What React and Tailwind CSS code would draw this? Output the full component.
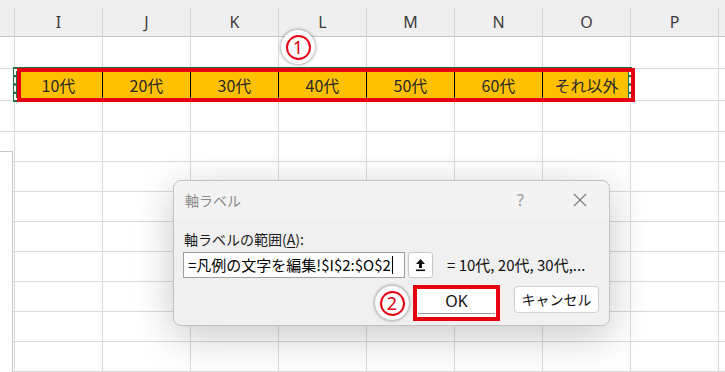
import React from "react";

const FONT = { fontFamily: "'Noto Sans', 'Noto Sans CJK JP', sans-serif" };
const JP = { fontFamily: "'Noto Sans CJK JP', 'Noto Sans', sans-serif" };

const cols = ["I", "J", "K", "L", "M", "N", "O", "P", ""];
const labels = ["10代", "20代", "30代", "40代", "50代", "60代", "それ以外"];

function Row({ h, children }) {
  return (
    <div className="flex border-b border-[#dadada]" style={{ height: h }}>
      {children}
    </div>
  );
}

function EmptyRow({ h }) {
  return (
    <Row h={h}>
      <div className="w-[14px] shrink-0" />
      {cols.map((c, i) => (
        <div key={i} className="w-[88px] shrink-0 border-l border-[#dadada]" />
      ))}
    </Row>
  );
}

function Marker({ n }) {
  return (
    <div className="w-[34px] h-[34px] rounded-full bg-white shadow-[0_0_3px_1px_rgba(0,0,0,0.3)] flex items-center justify-center">
      <div
        className="w-[25px] h-[25px] rounded-full border-2 border-[#e60012] flex items-center justify-center text-[#e60012] text-[18px] leading-none"
        style={FONT}
      >
        {n}
      </div>
    </div>
  );
}

export default function App() {
  return (
    <div className="relative w-[725px] h-[372px] overflow-hidden bg-white" style={FONT}>
      {/* header */}
      <div className="flex h-[37px] bg-[#efefef] border-b border-[#c4c4c4] pt-[8px]">
        <div className="w-[14px] shrink-0" />
        {cols.map((c, i) => (
          <div
            key={i}
            className="w-[88px] shrink-0 border-l border-[#d2d2d2] flex items-center justify-center text-[16px] text-[#3c3c3c]"
          >
            {c}
          </div>
        ))}
      </div>

      <EmptyRow h={32} />

      {/* selected row */}
      <Row h={32}>
        <div className="w-[14px] shrink-0" />
        {cols.map((c, i) =>
          i < 7 ? (
            <div
              key={i}
              className={`w-[88px] shrink-0 bg-[#ffc000] flex items-center justify-center text-[16px] text-[#2a2a2a] ${i === 0 ? "border-l border-[#dadada]" : "border-l border-black"}`}
              style={JP}
            >
              {labels[i]}
            </div>
          ) : (
            <div key={i} className="w-[88px] shrink-0 border-l border-[#dadada]" />
          )
        )}
      </Row>

      <EmptyRow h={31} />
      {[0, 1, 2, 3, 4, 5, 6, 7].map((i) => (
        <EmptyRow key={i} h={30} />
      ))}

      {/* left object edge */}
      <div className="absolute left-0 top-[151px] w-[13px] h-[230px] bg-white border-t border-r border-[#c8c8c8]" />

      {/* copy marquee */}
      <div className="absolute left-[13px] top-[67px] w-[619px] h-[35px] border-[4px] border-[#217346]" />
      <div className="absolute left-[14px] top-[69px] w-[617px] h-[31px] border-[2px] border-dashed border-white" />

      {/* red highlight */}
      <div className="absolute left-[17px] top-[68px] w-[618px] h-[34px] border-[4px] border-[#e60012]" />

      {/* marker 1 */}
      <div className="absolute left-[281px] top-[30px]">
        <Marker n="1" />
      </div>

      {/* dialog */}
      <div className="absolute left-[173px] top-[180px] w-[437px] h-[146px] rounded-[8px] bg-[#f0f0f0] border border-[#c2c2c2] shadow-[0_10px_40px_rgba(0,0,0,0.22)] flex flex-col" style={JP}>
        <div className="h-[38px] flex items-center pl-[11px] rounded-t-[8px] bg-[#f3f3f3]">
          <span className="text-[14px] text-[#8a8a8a]">軸ラベル</span>
          <span className="ml-auto mr-[49px] text-[16px] text-[#9a9a9a]" style={FONT}>?</span>
          <svg width="14" height="14" viewBox="0 0 14 14" className="mr-[22px]">
            <path d="M1 1 L13 13 M13 1 L1 13" stroke="#7a7a7a" strokeWidth="1.1" />
          </svg>
        </div>
        <div className="pl-[9px] pr-[10px] flex flex-col">
          <div className="mt-[10px] h-[20px] text-[14px] text-[#1a1a1a] leading-[20px] pl-[1px]">
            軸ラベルの範囲(<span className="underline underline-offset-2">A</span>):
          </div>
          <div className="mt-[3px] flex items-center">
            <div className="w-[222px] h-[26px] bg-white border border-[#a0a0a0] flex items-center pl-[4px] text-[15px] text-black">
              <span>=凡例の文字を編集!$I$2:$O$2</span>
              <span className="ml-[1px] w-px h-[18px] bg-black" />
            </div>
            <div className="ml-[3px] w-[25px] h-[26px] bg-white border border-[#c8c8c8] rounded-[3px] flex items-center justify-center">
              <svg width="11" height="14" viewBox="0 0 11 14">
                <path d="M5.5 1 L10 6 L7 6 L7 10 L4 10 L4 6 L1 6 Z" fill="#111" />
                <rect x="1" y="11.5" width="9" height="1.6" fill="#111" />
              </svg>
            </div>
            <span className="ml-[14px] text-[15px] text-[#111] whitespace-nowrap">= 10代, 20代, 30代,...</span>
          </div>
          <div className="mt-[7px] flex items-center justify-end">
            <Marker n="2" />
            <div className="ml-[4px] w-[87px] h-[36px] border-[4px] border-[#e60012] bg-white flex flex-col">
              <div className="flex-1 flex items-center justify-center text-[16px] text-[#111]" style={FONT}>OK</div>
              <div className="h-px bg-[#9a9a9a] mx-[1px] mb-[3px]" />
            </div>
            <div className="ml-[14px] w-[85px] h-[27px] mb-[8px] bg-white border border-[#cfcfcf] rounded-[4px] flex items-center justify-center text-[14px] text-[#111]">
              キャンセル
            </div>
          </div>
        </div>
      </div>
    </div>
  );
}
